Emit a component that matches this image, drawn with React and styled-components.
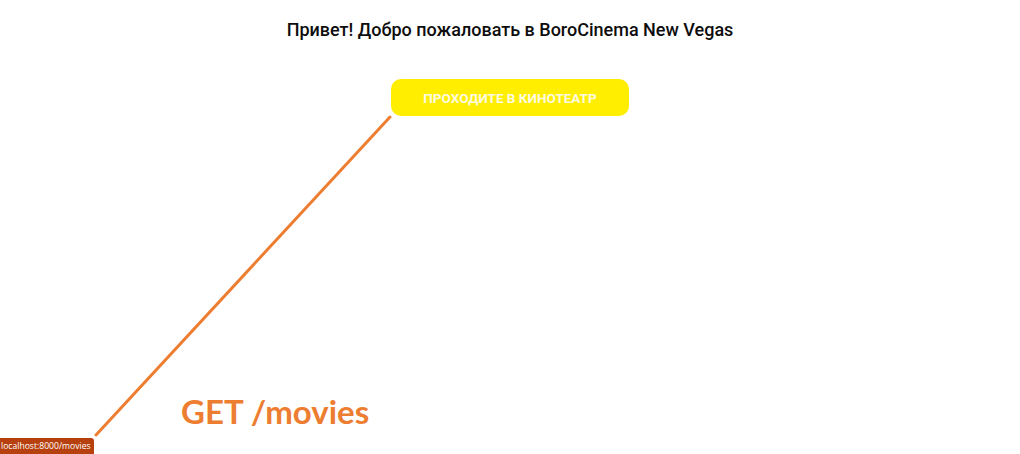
import React from "react";
import styled, { createGlobalStyle } from "styled-components";

const GlobalStyle = createGlobalStyle`
    html, body {
        margin: 0;
        padding: 0;
        background: #ffffff;
    }
    body {
        font-family: Roboto, "Liberation Sans", sans-serif;
    }
`;

const App = () => {
    return (
        <Page>
            <GlobalStyle />
            <Welcome>
                <Title>Привет! Добро пожаловать в BoroCinema New Vegas</Title>
                <EnterButton type="button">Проходите в кинотеатр</EnterButton>
            </Welcome>

            {/* annotation over the screenshot */}
            <Arrow width="1020" height="454" viewBox="0 0 1020 454">
                <line x1="390" y1="117" x2="96" y2="435" stroke="#ed7d31" strokeWidth="3" strokeLinecap="round" />
            </Arrow>
            <Label>GET /movies</Label>

            <StatusBar>localhost:8000/movies</StatusBar>
        </Page>
    );
};

//styled components
const Page = styled.div`
    position: relative;
    width: 1020px;
    height: 454px;
    overflow: hidden;
`;

const Welcome = styled.div`
    display: flex;
    flex-direction: column;
    align-items: center;
    padding-top: 19px;
`;

const Title = styled.h1`
    margin: 0;
    font-size: 18px;
    line-height: 22px;
    font-weight: 500;
    color: #0d0d0d;
`;

const EnterButton = styled.button`
    margin-top: 38px;
    width: 238px;
    height: 37px;
    border: none;
    border-radius: 10px;
    background: #ffee00;
    color: #fffbe0;
    font-family: Roboto, "Liberation Sans", sans-serif;
    font-size: 13.5px;
    font-weight: 700;
    text-transform: uppercase;
    cursor: pointer;
`;

const Arrow = styled.svg`
    position: absolute;
    top: 0;
    left: 0;
    pointer-events: none;
`;

const Label = styled.div`
    position: absolute;
    left: 181px;
    top: 391px;
    font-family: Lato, "Open Sans", sans-serif;
    font-size: 33px;
    font-weight: 700;
    color: #ed7d31;
`;

const StatusBar = styled.div`
    position: absolute;
    left: 0;
    bottom: 0;
    height: 16px;
    padding: 0 3px 0 1px;
    border-top-right-radius: 3px;
    background: #b7410e;
    color: #fff;
    font-family: "Open Sans", sans-serif;
    font-size: 8.6px;
    line-height: 16px;
`;

export default App;
